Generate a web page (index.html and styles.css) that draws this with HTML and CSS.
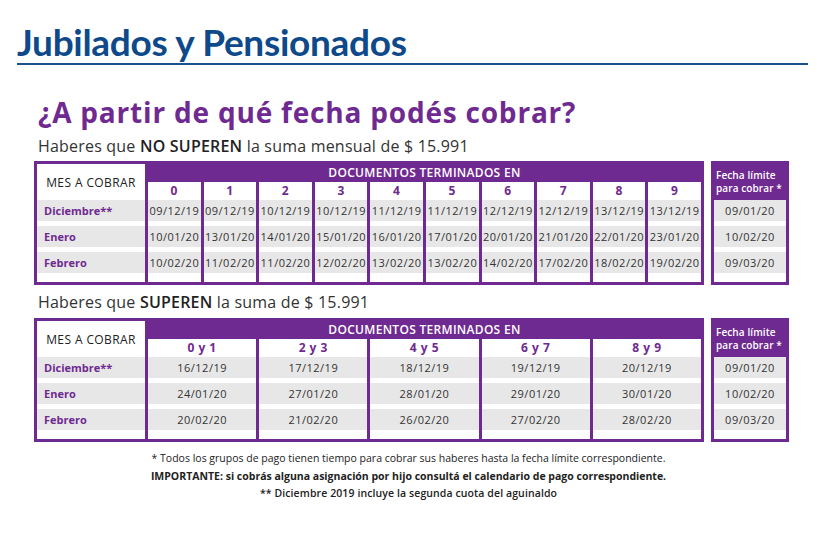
FILE: index.html
```html
<!DOCTYPE html>
<html lang="es">
<head>
<meta charset="utf-8">
<title>Jubilados y Pensionados</title>
<link rel="stylesheet" href="styles.css">
</head>
<body>
<div class="page">
  <header class="top">
    <h1 class="title">Jubilados y Pensionados</h1>
  </header>
  <section class="content">
    <h2 class="heading">¿A partir de qué fecha podés cobrar?</h2>
    <p class="sub">Haberes que <b>NO SUPEREN</b> la suma mensual de $ 15.991</p>
    <div class="tbl">
      <div class="main">
        <div class="labels">
          <div class="mes">MES A COBRAR</div>
          <div class="rows">
            <div class="cell month">Diciembre**</div>
            <div class="cell month">Enero</div>
            <div class="cell month">Febrero</div>
          </div>
        </div>
        <div class="docs">
          <div class="band">DOCUMENTOS TERMINADOS EN</div>
          <div class="cols ten">
            <div class="col"><div class="dig">0</div><div class="rows"><div class="cell">09/12/19</div><div class="cell">10/01/20</div><div class="cell">10/02/20</div></div></div>
            <div class="col"><div class="dig">1</div><div class="rows"><div class="cell">09/12/19</div><div class="cell">13/01/20</div><div class="cell">11/02/20</div></div></div>
            <div class="col"><div class="dig">2</div><div class="rows"><div class="cell">10/12/19</div><div class="cell">14/01/20</div><div class="cell">11/02/20</div></div></div>
            <div class="col"><div class="dig">3</div><div class="rows"><div class="cell">10/12/19</div><div class="cell">15/01/20</div><div class="cell">12/02/20</div></div></div>
            <div class="col"><div class="dig">4</div><div class="rows"><div class="cell">11/12/19</div><div class="cell">16/01/20</div><div class="cell">13/02/20</div></div></div>
            <div class="col"><div class="dig">5</div><div class="rows"><div class="cell">11/12/19</div><div class="cell">17/01/20</div><div class="cell">13/02/20</div></div></div>
            <div class="col"><div class="dig">6</div><div class="rows"><div class="cell">12/12/19</div><div class="cell">20/01/20</div><div class="cell">14/02/20</div></div></div>
            <div class="col"><div class="dig">7</div><div class="rows"><div class="cell">12/12/19</div><div class="cell">21/01/20</div><div class="cell">17/02/20</div></div></div>
            <div class="col"><div class="dig">8</div><div class="rows"><div class="cell">13/12/19</div><div class="cell">22/01/20</div><div class="cell">18/02/20</div></div></div>
            <div class="col"><div class="dig">9</div><div class="rows"><div class="cell">13/12/19</div><div class="cell">23/01/20</div><div class="cell">19/02/20</div></div></div>
          </div>
        </div>
      </div>
      <div class="limit">
        <div class="lhead"><span>Fecha límite</span><span>para cobrar *</span></div>
        <div class="rows">
          <div class="cell">09/01/20</div>
          <div class="cell">10/02/20</div>
          <div class="cell">09/03/20</div>
        </div>
      </div>
    </div>

    <p class="sub sub2">Haberes que <b>SUPEREN</b> la suma de $ 15.991</p>
    <div class="tbl tbl2">
      <div class="main">
        <div class="labels">
          <div class="mes">MES A COBRAR</div>
          <div class="rows">
            <div class="cell month">Diciembre**</div>
            <div class="cell month">Enero</div>
            <div class="cell month">Febrero</div>
          </div>
        </div>
        <div class="docs">
          <div class="band">DOCUMENTOS TERMINADOS EN</div>
          <div class="cols five">
            <div class="col"><div class="dig">0 y 1</div><div class="rows"><div class="cell">16/12/19</div><div class="cell">24/01/20</div><div class="cell">20/02/20</div></div></div>
            <div class="col"><div class="dig">2 y 3</div><div class="rows"><div class="cell">17/12/19</div><div class="cell">27/01/20</div><div class="cell">21/02/20</div></div></div>
            <div class="col"><div class="dig">4 y 5</div><div class="rows"><div class="cell">18/12/19</div><div class="cell">28/01/20</div><div class="cell">26/02/20</div></div></div>
            <div class="col"><div class="dig">6 y 7</div><div class="rows"><div class="cell">19/12/19</div><div class="cell">29/01/20</div><div class="cell">27/02/20</div></div></div>
            <div class="col"><div class="dig">8 y 9</div><div class="rows"><div class="cell">20/12/19</div><div class="cell">30/01/20</div><div class="cell">28/02/20</div></div></div>
          </div>
        </div>
      </div>
      <div class="limit">
        <div class="lhead"><span>Fecha límite</span><span>para cobrar *</span></div>
        <div class="rows">
          <div class="cell">09/01/20</div>
          <div class="cell">10/02/20</div>
          <div class="cell">09/03/20</div>
        </div>
      </div>
    </div>

    <div class="notes">
      <p class="n1">* Todos los grupos de pago tienen tiempo para cobrar sus haberes hasta la fecha límite correspondiente.</p>
      <p class="n2">IMPORTANTE: si cobrás alguna asignación por hijo consultá el calendario de pago correspondiente.</p>
      <p class="n3">** Diciembre 2019 incluye la segunda cuota del aguinaldo</p>
    </div>
  </section>
</div>
</body>
</html>
```

FILE: styles.css
```css
* { box-sizing: border-box; }
html, body { margin: 0; padding: 0; background: #fff; }
body {
  width: 817px;
  height: 539px;
  overflow: hidden;
  font-family: "Open Sans", "DejaVu Sans", sans-serif;
  color: #333;
}
.top {
  margin: 0 9px 0 17px;
  padding-top: 22px;
  border-bottom: 2px solid #1a5190;
  height: 65px;
}
.title {
  margin: 0;
  font-family: Lato, "Open Sans", sans-serif;
  font-weight: 700;
  font-size: 37px;
  line-height: 40px;
  color: #0e4a8a;
  letter-spacing: -0.3px;
}
.content {
  padding-left: 34px;
}
.heading {
  margin: 29px 0 0 4px;
  font-size: 28px;
  line-height: 36px;
  font-weight: 700;
  color: #6f2a91;
  letter-spacing: 0.8px;
}
.sub {
  margin: 6px 0 0 4px;
  font-size: 16px;
  line-height: 20px;
  color: #333;
  letter-spacing: 0.2px;
}
.sub b { font-weight: 600; color: #222; }
.sub2 { margin-top: 7px; }

.tbl {
  display: flex;
  gap: 7px;
  margin-top: 5px;
}
.tbl2 { margin-top: 6px; }
.main {
  width: 670px;
  display: flex;
  gap: 3px;
  padding: 3px;
  background: #6f2a91;
}
.labels {
  width: 108px;
  background: #fff;
  display: flex;
  flex-direction: column;
}
.mes {
  height: 36px;
  display: flex;
  align-items: center;
  justify-content: center;
  font-size: 12px;
  font-weight: 500;
  color: #222;
  letter-spacing: 0.4px;
}
.rows {
  display: flex;
  flex-direction: column;
  gap: 5px;
  padding-bottom: 9px;
}
.cell {
  height: 21px;
  background: #e7e7e7;
  display: flex;
  align-items: center;
  justify-content: center;
  font-size: 11px;
  color: #333;
  letter-spacing: 0.5px;
  white-space: nowrap;
}
.cell.month {
  justify-content: flex-start;
  padding-left: 7px;
  color: #6f2a91;
  font-weight: 700;
  letter-spacing: 0;
}
.docs {
  flex: 1;
  display: flex;
  flex-direction: column;
}
.band {
  height: 18px;
  line-height: 18px;
  text-align: center;
  color: #fff;
  font-size: 12px;
  font-weight: 600;
  letter-spacing: 0.3px;
}
.cols {
  flex: 1;
  display: grid;
  gap: 3px;
}
.ten { grid-template-columns: repeat(10, 1fr); }
.five { grid-template-columns: repeat(5, 1fr); }
.col {
  background: #fff;
  display: flex;
  flex-direction: column;
}
.dig {
  height: 18px;
  line-height: 18px;
  text-align: center;
  color: #6f2a91;
  font-weight: 700;
  font-size: 12px;
  letter-spacing: 0.5px;
}
.limit {
  width: 78px;
  border: 3px solid #6f2a91;
  background: #fff;
  display: flex;
  flex-direction: column;
}
.lhead {
  height: 36px;
  background: #6f2a91;
  color: #fff;
  font-size: 10px;
  font-weight: 600;
  line-height: 13px;
  padding: 5px 0 0 2px;
  white-space: nowrap;
  display: flex;
  flex-direction: column;
  letter-spacing: 0.1px;
}
.notes {
  margin-left: -34px;
  text-align: center;
  padding-top: 8px;
}
.notes p {
  margin: 0;
  font-size: 10.5px;
  line-height: 17.5px;
  color: #222;
}
.notes .n2 { font-weight: 700; }
.notes .n3 { font-weight: 600; letter-spacing: 0.1px; }
```
